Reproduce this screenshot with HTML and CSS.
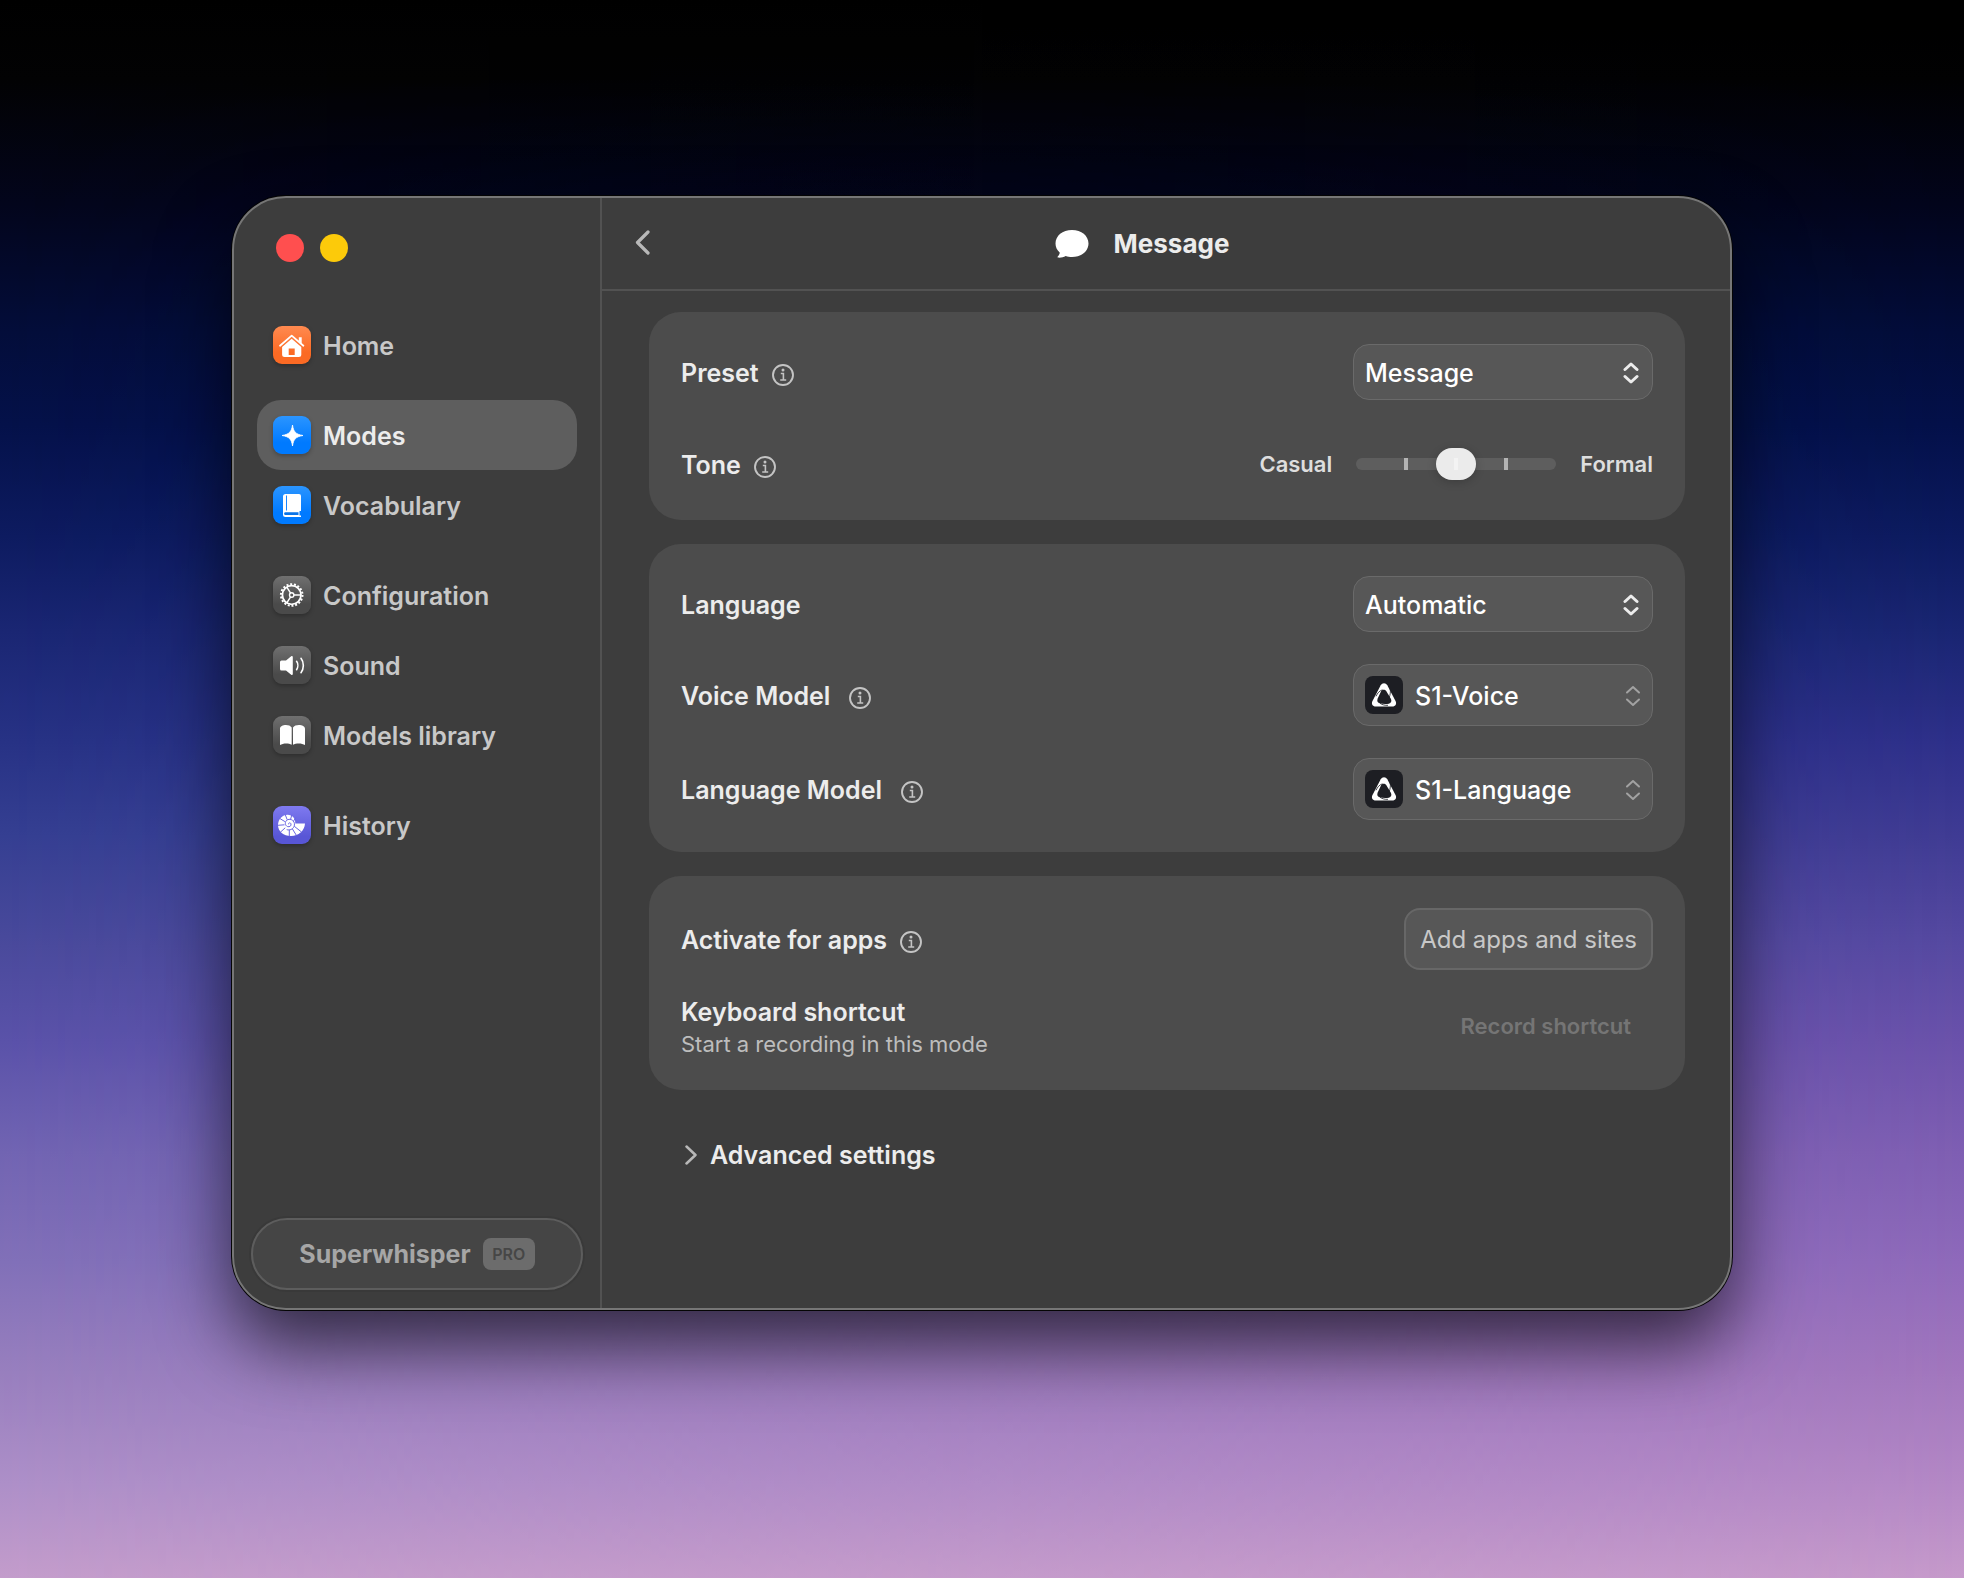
FILE: index.html
```html
<!DOCTYPE html>
<html lang="en">
<head>
    <meta charset="utf-8">
    <title>Superwhisper - Message</title>
    <link rel="stylesheet" href="styles.css">
</head>
<body>

<!-- shared shapes -->
<svg class="symbols" aria-hidden="true">
    <symbol id="info" viewBox="0 0 22 22">
        <circle cx="11" cy="11" r="10" fill="none" stroke="currentColor" stroke-width="1.9"/>
        <circle cx="11" cy="6.1" r="1.5" fill="currentColor"/>
        <path d="M8.800 9.500h2.600v6.200M8.200 16h6" fill="none" stroke="currentColor" stroke-width="1.6"/>
    </symbol>
    <symbol id="updown" viewBox="0 0 16 22">
        <path d="M2 7.5 8 2l6 5.500M2 14.500 8 20l6-5.500" fill="none" stroke="currentColor" stroke-linecap="round" stroke-linejoin="round"/>
    </symbol>
    <symbol id="s1" viewBox="0 0 38 38">
        <rect width="38" height="38" rx="8" fill="#1d1e23"/>
        <path d="M15.700 9.300C17.200 6.500 20.800 6.500 22.300 9.300L30.500 25C32 28 30.400 30.500 27.300 30.500H10.700C7.600 30.500 6 28 7.500 25Z" fill="#fff"/>
        <path d="M16.200 15C17.500 13.200 20 13.200 21.200 15L26 23C27 25.300 26 27.300 23.800 27.700 20.500 28.200 17.500 28 14.500 27.300 12.300 26.700 11.800 24.800 12.700 22.500Z" fill="#1d1e23"/>
        <path d="M17.500 13.800C14.500 14.700 12.500 17 11 20.300M24.300 21.500C25.200 18.500 25.600 16 25.300 13M15 27.300C17.500 28.900 20 29.500 23 29.300" fill="none" stroke="#1d1e23" stroke-width=".8"/>
    </symbol>
</svg>

<div class="window">
    <aside class="sidebar">
        <div class="lights">
            <button class="light light-close" aria-label="Close"></button>
            <button class="light light-minimize" aria-label="Minimize"></button>
        </div>

        <nav class="nav">
            <div class="nav-group">
                <a class="nav-item" href="#home">
                    <svg class="nav-icon orange" viewBox="0 0 38 38">
                        <path d="M7 19.700 18.700 9.600 30.400 19.700" fill="none" stroke="#fff" stroke-width="1.800" stroke-linecap="round" stroke-linejoin="round"/>
                        <path d="M25.800 11.300h2.900v6.400l-2.900-2.500z" fill="#fff"/>
                        <path fill-rule="evenodd" d="M18.700 12.800 28.300 21v7.500a2.500 2.500 0 0 1-2.500 2.500H11.600a2.500 2.500 0 0 1-2.500-2.500V21zM15.700 22.500v6.500h6v-6.500z" fill="#fff"/>
                    </svg>
                    Home
                </a>
            </div>
            <div class="nav-group">
                <a class="nav-item active" href="#modes">
                    <svg class="nav-icon blue" viewBox="0 0 38 38">
                        <path d="M19.500 9C20.500 15.700 22.600 18.300 30 19.500 22.600 20.700 20.500 23.300 19.500 30 18.500 23.300 16.400 20.700 9 19.500 16.400 18.300 18.500 15.700 19.500 9Z" fill="#fff" stroke="#fff" stroke-width=".8" stroke-linejoin="round"/>
                    </svg>
                    Modes
                </a>
                <a class="nav-item" href="#vocabulary">
                    <svg class="nav-icon blue" viewBox="0 0 38 38">
                        <path d="M12.500 8H26a2 2 0 0 1 2 2v15h-1.500v4.500h1.500v1.500H12.500A2.500 2.500 0 0 1 10 28.500V10.500A2.500 2.500 0 0 1 12.500 8z" fill="#fff"/>
                        <path d="M13.500 9.500V24.500" stroke="#1a86ff" stroke-width="1"/>
                        <path d="M12.500 26.300h13v2.800h-13a1.400 1.400 0 0 1 0-2.800z" fill="#0a74e8"/>
                    </svg>
                    Vocabulary
                </a>
            </div>
            <div class="nav-group">
                <a class="nav-item" href="#configuration">
                    <svg class="nav-icon gray" viewBox="0 0 38 38" fill="none" stroke="#fff">
                        <circle cx="18.700" cy="19" r="10.800" stroke-width="2" stroke-dasharray="2 1.770"/>
                        <circle cx="18.700" cy="19" r="9.300" stroke-width="1.800"/>
                        <circle cx="18.700" cy="19" r="2.200" stroke-width="1.400"/>
                        <path d="M21 19h7M17.600 17.100 13.800 11.200M17.600 20.900 13.800 26.800" stroke-width="1.500"/>
                    </svg>
                    Configuration
                </a>
                <a class="nav-item" href="#sound">
                    <svg class="nav-icon gray" viewBox="0 0 38 38">
                        <path d="M8.500 14.500h4.500l5.200-4.200c.8-.6 1.600-.3 1.600.7v17c0 1-.8 1.300-1.600.7L13 24.500H8.500A1.500 1.500 0 0 1 7 23v-7a1.500 1.500 0 0 1 1.500-1.500z" fill="#fff"/>
                        <path d="M23.600 15.300c1.600 2.300 1.600 6.100 0 8.400M28 12.300c3.100 4 3.100 10.400 0 14.400" fill="none" stroke="#fff" stroke-width="1.600" stroke-linecap="round"/>
                    </svg>
                    Sound
                </a>
                <a class="nav-item" href="#models">
                    <svg class="nav-icon gray" viewBox="0 0 38 38">
                        <path d="M18.700 11.500V28.700C15.700 26.900 10 26.900 7 29V12.800C7 8.300 16.500 7.800 18.700 11.500zM20 11.500V28.700C23 26.900 29 26.900 32 29V12.800C32 8.300 22.200 7.800 20 11.500z" fill="#fff"/>
                    </svg>
                    Models library
                </a>
            </div>
            <div class="nav-group">
                <a class="nav-item" href="#history">
                    <svg class="nav-icon purple" viewBox="0 0 38 38">
                        <path d="M32 17.500C31.500 25 25.500 30 18 30 10.500 30 5 25.500 5 19 5 13 9.500 8.700 14.500 8.700 19.500 8.700 22.500 12.500 22.300 17.500Z" fill="#fff"/>
                        <g fill="none" stroke="#6a64e2" stroke-width="1">
                            <path d="M15.500 18.300c-.4-1.400 1.700-2.100 2.400-.6.800 2-1.300 3.600-3.300 2.900-2.700-1-3-4.700-.8-6.400 2.800-2 6.800-.5 7.600 3.100.2 1.200 0 2.400-.4 3.300-1.300 2.800-4.400 4-7.300 3"/>
                            <path d="M11.900 15.600 7 12.600M14.200 13.700 12.300 8.800M17.500 13.700 18.800 8.800M20.300 15.300 23 11.500M11.500 18.800 4.800 19.300M12.200 21.800 7.300 26.300M16.300 23.800V30.500M19.300 22.800 23.500 29.500M21.300 20.300 28.500 26"/>
                        </g>
                    </svg>
                    History
                </a>
            </div>
        </nav>

        <button class="account">Superwhisper <span class="badge">PRO</span></button>
    </aside>

    <main class="main">
        <header class="header">
            <button class="back" aria-label="Back">
                <svg width="15" height="25" viewBox="0 0 15 25"><path d="M13 2 2.500 12.500 13 23" fill="none" stroke="currentColor" stroke-width="3.200" stroke-linecap="round" stroke-linejoin="round"/></svg>
            </button>
            <h1 class="title">
                <svg width="34" height="28" viewBox="0 0 34 28"><path d="M17 0C26.500 0 33.500 5.800 33.500 13.500S26.500 27 17 27c-2.400 0-4.400-.3-6.300-1C8.500 27.300 5.500 27.900 3.200 27.600c-.7-.1-.9-.7-.4-1.200 1.300-1.400 1.900-2.500 1.900-4C2 20.200.500 17 .5 13.500.500 5.800 7.500 0 17 0z" fill="#fff"/></svg>
                Message
            </h1>
        </header>

        <div class="content">
            <section class="card">
                <div class="row">
                    <label class="label" for="preset">Preset</label>
                    <svg class="info"><use href="#info"/></svg>
                    <div class="picker">
                        <select id="preset"><option>Message</option></select>
                        <svg class="arrows"><use href="#updown"/></svg>
                    </div>
                </div>
                <div class="row row-tone">
                    <label class="label" for="tone">Tone</label>
                    <svg class="info"><use href="#info"/></svg>
                    <div class="tone">
                        <span>Casual</span>
                        <input class="slider" type="range" id="tone" min="0" max="4" value="2">
                        <span>Formal</span>
                    </div>
                </div>
            </section>

            <section class="card">
                <div class="row">
                    <label class="label" for="language">Language</label>
                    <div class="picker">
                        <select id="language"><option>Automatic</option></select>
                        <svg class="arrows"><use href="#updown"/></svg>
                    </div>
                </div>
                <div class="row">
                    <label class="label label-wide" for="voice">Voice Model</label>
                    <svg class="info"><use href="#info"/></svg>
                    <div class="picker picker-model">
                        <svg class="model-icon"><use href="#s1"/></svg>
                        <select id="voice"><option>S1-Voice</option></select>
                        <svg class="arrows"><use href="#updown"/></svg>
                    </div>
                </div>
                <div class="row">
                    <label class="label label-wide" for="llm">Language Model</label>
                    <svg class="info"><use href="#info"/></svg>
                    <div class="picker picker-model">
                        <svg class="model-icon"><use href="#s1"/></svg>
                        <select id="llm"><option>S1-Language</option></select>
                        <svg class="arrows"><use href="#updown"/></svg>
                    </div>
                </div>
            </section>

            <section class="card card-tight">
                <div class="row">
                    <span class="label">Activate for apps</span>
                    <svg class="info"><use href="#info"/></svg>
                    <button class="add">Add apps and sites</button>
                </div>
                <div class="row">
                    <div class="shortcut">
                        <span class="label">Keyboard shortcut</span>
                        <span class="hint">Start a recording in this mode</span>
                    </div>
                    <button class="record">Record shortcut</button>
                </div>
            </section>

            <button class="advanced">
                <svg width="12" height="20" viewBox="0 0 12 20"><path d="M1.500 1.500 10.500 10l-9 8.500" fill="none" stroke="currentColor" stroke-width="2.500" stroke-linecap="round" stroke-linejoin="round"/></svg>
                Advanced settings
            </button>
        </div>
    </main>
</div>

</body>
</html>
```
FILE: styles.css
```css
:root {
    --window-bg: #3d3d3d;
    --card-bg: #4c4c4c;
    --control-bg: #575757;
    --control-border: #6a6a6a;
    --line: #525252;
    --text: #ececec;
    --text-dim: #c8c8c8;
}

* {
    box-sizing: border-box;
}

body {
    margin: 0;
    min-height: 100vh;
    padding: 196px 232px 268px;
    display: flex;
    position: relative;
    font-family: Inter, "Liberation Sans", sans-serif;
    font-size: 25px;
    font-weight: 600;
    line-height: 32px;
    color: var(--text);
    background: linear-gradient(#000 0%, #020203 5%, #03051c 13%, #030d3a 21%, #04114a 27%, #0d1b60 34%, #1a2673 40%, #2e308a 47%, #403c94 53%, #574aa2 60%, #6b52ab 66%, #7f5fb3 73%, #8f6abb 80%, #a277be 87%, #b488c6 94%, #c69acb 100%);
}

/* cooler sky on the left side, fading out to the right */
body::before {
    content: "";
    position: absolute;
    inset: 0;
    background: linear-gradient(#000 0%, #020203 5%, #03051c 13%, #030d3a 21%, #04114a 27%, #0d1b60 34%, #1a2673 40%, #273285 47%, #353f92 53%, #4a4a9c 60%, #5a52a9 66%, #7164b2 73%, #8170b8 80%, #987fbe 87%, #ad8fc8 94%, #c39ccb 100%);
    mask-image: linear-gradient(to right, #000, transparent);
}

button, select, input {
    font: inherit;
    color: inherit;
    margin: 0;
    padding: 0;
    border: none;
    background: none;
}

.symbols {
    position: absolute;
    width: 0;
    height: 0;
}

.window {
    position: relative;
    flex: 1;
    display: flex;
    background: var(--window-bg);
    border: 2px solid #767676;
    border-radius: 54px;
    box-shadow: 0 0 0 1px #050505, 0 36px 72px rgba(0, 0, 0, 0.65);
}

/* sidebar */
.sidebar {
    width: 368px;
    display: flex;
    flex-direction: column;
    border-right: 2px solid var(--line);
    padding: 36px 17px 18px;
}

.lights {
    display: flex;
    gap: 16px;
    padding-left: 25px;
    margin-bottom: 48px;
}

.light {
    width: 28px;
    height: 28px;
    border-radius: 50%;
}

.light-close {
    background: #ff4f4f;
}

.light-minimize {
    background: #fcca0a;
}

.nav {
    flex: 1;
    display: flex;
    flex-direction: column;
    gap: 20px;
    padding: 0 6px;
}

.nav-item {
    height: 70px;
    display: flex;
    align-items: center;
    gap: 12px;
    padding: 2px 16px 0;
    border-radius: 24px;
    color: var(--text-dim);
    text-decoration: none;
}

.nav-item.active {
    background: #5e5e5e;
    color: var(--text);
}

.nav-icon {
    width: 38px;
    height: 38px;
    border-radius: 9px;
    margin-bottom: 2px;
    box-shadow: 0 2px 4px rgba(0, 0, 0, 0.25);
}

.orange {
    background: linear-gradient(#ff8a50, #fb6a24 70%);
}

.blue {
    background: linear-gradient(#2b95ff, #007aff 70%);
}

.gray {
    background: linear-gradient(#707070, #4a4a4a 75%);
}

.purple {
    background: linear-gradient(#7f7af0, #5856d6 80%);
}

.account {
    height: 72px;
    display: flex;
    align-items: center;
    justify-content: center;
    gap: 12px;
    border: 2px solid #5d5d5d;
    border-radius: 36px;
    background: #454545;
    box-shadow: 0 0 0 2px #393939;
    color: #a6a6a6;
    font-weight: 700;
}

.badge {
    width: 52px;
    height: 32px;
    border-radius: 8px;
    background: #6c6c6c;
    color: #464646;
    font-size: 16px;
    font-weight: 600;
}

/* main column */
.main {
    flex: 1;
    min-width: 0;
}

.header {
    height: 93px;
    display: grid;
    grid-template-columns: 48px 1fr 96px;
    align-items: center;
    border-bottom: 2px solid var(--line);
}

.back {
    display: flex;
    justify-content: flex-end;
    padding-bottom: 2px;
    color: #b8b8b8;
}

.title {
    margin: 0;
    display: flex;
    align-items: center;
    justify-content: center;
    gap: 25px;
    font-size: 26px;
    font-weight: 700;
}

.content {
    display: flex;
    flex-direction: column;
    gap: 24px;
    padding: 21px 45px 0 47px;
}

.card {
    display: flex;
    flex-direction: column;
    gap: 32px;
    padding: 32px;
    border-radius: 32px;
    background: var(--card-bg);
}

.card-tight {
    gap: 24px;
}

.row {
    display: flex;
    align-items: center;
}

.row-tone {
    height: 56px;
    padding-top: 8px;
}

.label {
    padding-top: 2px;
    margin-right: 13px;
}

.label-wide {
    margin-right: 19px;
}

.info {
    width: 22px;
    height: 22px;
    margin-top: 5px;
    color: #c4c4c4;
}

.picker, .tone, .add, .record {
    margin-left: auto;
}

.picker {
    position: relative;
    width: 300px;
}

.picker select {
    display: block;
    width: 100%;
    height: 56px;
    padding: 2px 0 0 11px;
    border: 1px solid var(--control-border);
    border-radius: 16px;
    background: var(--control-bg);
    color: #fff;
    font-weight: 500;
    appearance: none;
}

.picker .arrows {
    position: absolute;
    top: 18px;
    right: 14px;
    width: 16px;
    height: 22px;
    stroke-width: 3;
    pointer-events: none;
}

.picker-model select {
    height: 62px;
    padding-left: 61px;
}

.picker-model .arrows {
    top: 21px;
    right: 12px;
    color: #a2a2a2;
    stroke-width: 2;
}

.model-icon {
    position: absolute;
    top: 12px;
    left: 12px;
    width: 38px;
    height: 38px;
    pointer-events: none;
}

.tone {
    display: flex;
    align-items: center;
    gap: 24px;
    font-size: 22px;
    color: #dedede;
}

.slider {
    width: 200px;
    height: 32px;
    appearance: none;
}

.slider::-webkit-slider-runnable-track {
    height: 12px;
    border-radius: 6px;
    background:
        linear-gradient(#b4b4b4, #b4b4b4) 48px 0 / 4px 12px no-repeat,
        linear-gradient(#b4b4b4, #b4b4b4) 148px 0 / 4px 12px no-repeat,
        #5e5e5e;
}

.slider::-webkit-slider-thumb {
    appearance: none;
    width: 40px;
    height: 32px;
    margin-top: -10px;
    border-radius: 16px;
    background: linear-gradient(#f3f3f3, #f3f3f3) center / 4px 12px no-repeat, #ebebeb;
    box-shadow: 0 2px 10px rgba(0, 0, 0, 0.2);
}

.add {
    height: 62px;
    padding: 2px 14px 0;
    border: 2px solid #676767;
    border-radius: 16px;
    background: var(--control-bg);
    color: var(--text-dim);
    font-size: 24px;
    font-weight: 400;
}

.shortcut {
    display: flex;
    flex-direction: column;
    gap: 2px;
}

.hint {
    font-size: 22px;
    font-weight: 400;
    line-height: 28px;
    color: #bdbdbd;
}

.record {
    padding-right: 22px;
    font-size: 22px;
    color: #757575;
}

.advanced {
    align-self: flex-start;
    display: flex;
    align-items: center;
    gap: 13px;
    margin: 25px 0 0 36px;
}

.advanced svg {
    color: #b8b8b8;
}
```
